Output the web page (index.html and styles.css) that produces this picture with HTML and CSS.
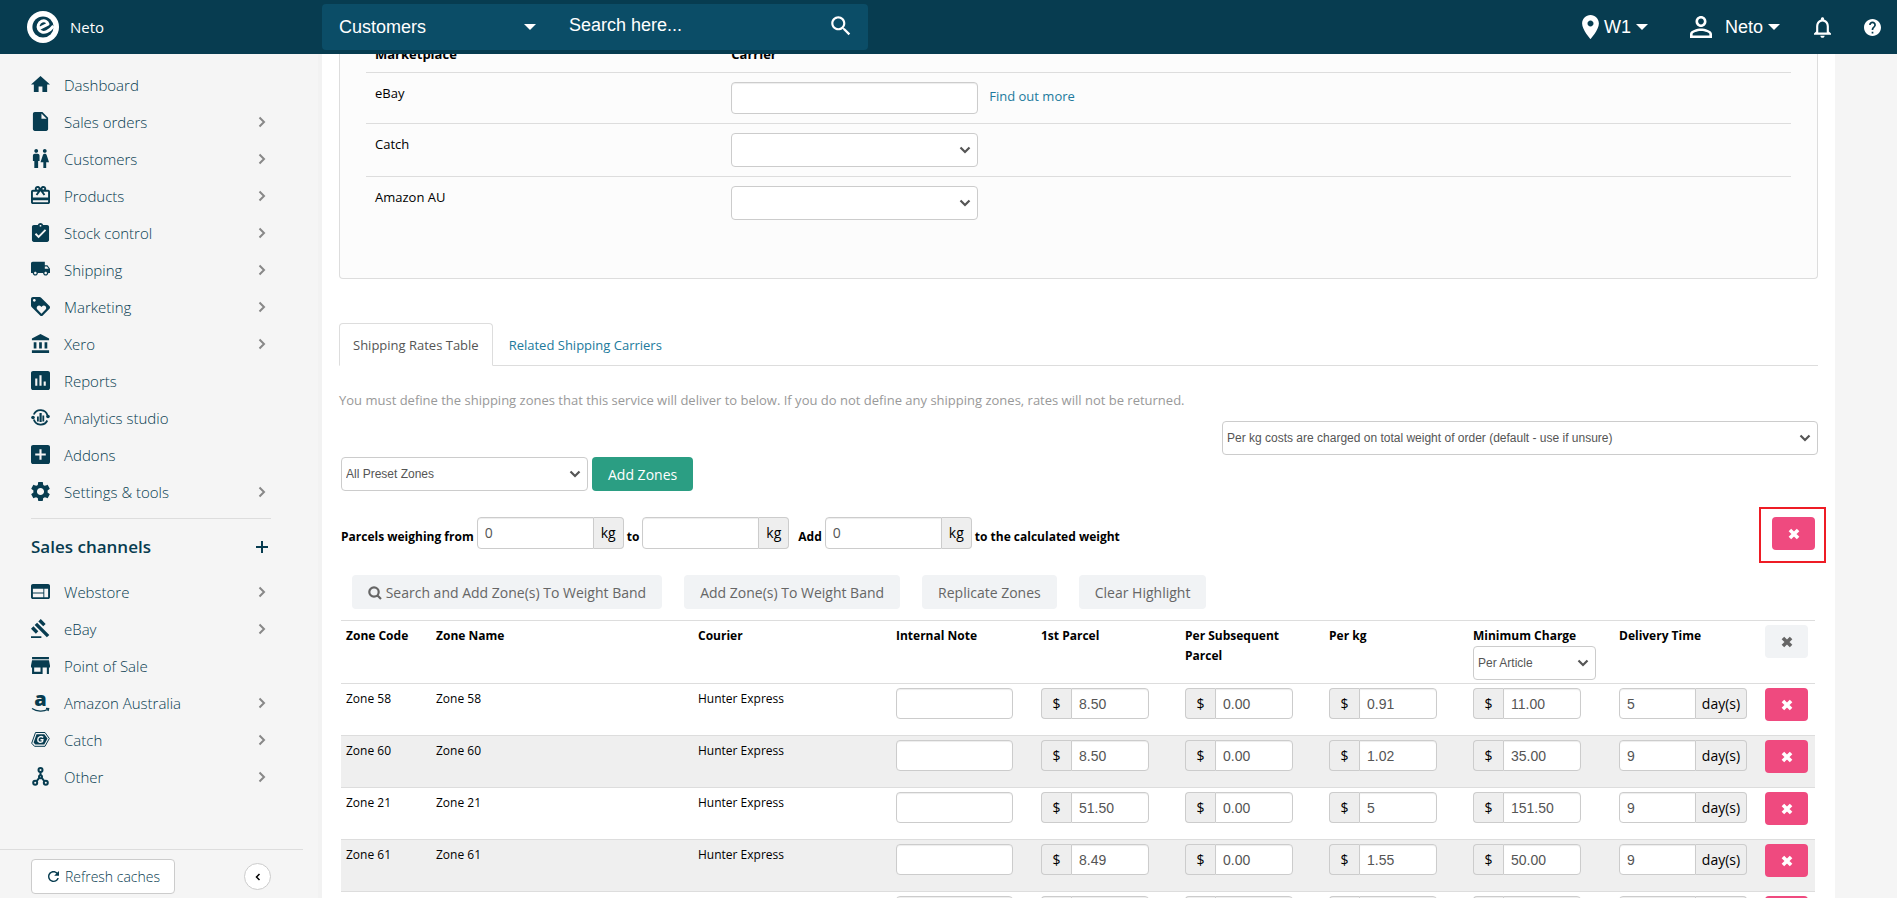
FILE: index.html
```html
<!DOCTYPE html>
<html lang="en">

<head>
    <meta charset="UTF-8">
    <meta name="viewport" content="width=device-width, initial-scale=1.0">
    <title>Neto</title>
    <link rel="stylesheet" href="styles.css">
</head>

<body>
    <!-- Shared icons -->
    <svg class="icon-defs" aria-hidden="true">
        <symbol id="icon-times" viewBox="0 0 12 12">
            <path d="M3.200 3.200l5.600 5.600M8.800 3.200l-5.600 5.600" fill="none" stroke="currentColor" stroke-width="3.600" stroke-linecap="square" />
        </symbol>
        <symbol id="icon-chevron" viewBox="0 0 8 12">
            <path d="M1.500 1.500L6 6l-4.500 4.500" fill="none" stroke="currentColor" stroke-width="2" />
        </symbol>
        <symbol id="icon-caret" viewBox="0 0 12 6">
            <path d="M0 0h12L6 6z" />
        </symbol>
    </svg>

    <!-- Top Bar -->
    <header class="topbar">
        <a class="brand" href="#">
            <svg class="brand-logo" viewBox="0 0 32 32" aria-hidden="true">
                <circle cx="16" cy="16" r="16" fill="#fff" />
                <circle cx="16" cy="16" r="10.600" fill="#073c50" />
                <path d="M11.500 17.800L21 13.200C20.300 10.600 17.600 9 14.900 10.200c-3.400 1.500-4.700 5.200-3.300 8 1.500 3 5 3.900 8.200 2.500 2.400-1 4.400-2.700 6.700-5.700" fill="none" stroke="#fff" stroke-width="3" stroke-linejoin="round" />
            </svg>
            <span>Neto</span>
        </a>
        <form class="search">
            <button type="button" class="search-type">Customers <svg class="caret"><use href="#icon-caret" /></svg></button>
            <input type="text" class="search-input" placeholder="Search here..." aria-label="Search">
            <button type="button" class="search-go" aria-label="Go">
                <svg viewBox="0 0 24 24"><path d="M15.500 14h-.79l-.28-.27C15.410 12.590 16 11.110 16 9.500 16 5.910 13.090 3 9.500 3S3 5.910 3 9.500 5.910 16 9.500 16c1.610 0 3.090-.59 4.230-1.570l.27.28v.79l5 4.990L20.490 19l-4.990-5zm-6 0C7.010 14 5 11.990 5 9.500S7.010 5 9.500 5 14 7.010 14 9.500 11.990 14 9.500 14z" /></svg>
            </button>
        </form>
        <nav class="top-actions">
            <button type="button" class="top-btn top-warehouse">
                <svg class="pin" viewBox="5 2 14 20"><path d="M12 2C8.130 2 5 5.130 5 9c0 5.250 7 13 7 13s7-7.750 7-13c0-3.870-3.130-7-7-7zm0 9.500c-1.380 0-2.500-1.120-2.500-2.500s1.120-2.500 2.500-2.500 2.500 1.120 2.500 2.500-1.120 2.500-2.500 2.500z" /></svg>
                W1 <svg class="caret"><use href="#icon-caret" /></svg>
            </button>
            <button type="button" class="top-btn top-user">
                <svg class="person" viewBox="4 4 16 16"><path d="M12 5.900c1.160 0 2.100.94 2.100 2.100s-.94 2.100-2.100 2.100S9.900 9.160 9.900 8s.94-2.100 2.100-2.100m0 9c2.970 0 6.100 1.460 6.100 2.100v1.100H5.900V17c0-.64 3.130-2.100 6.100-2.100M12 4C9.790 4 8 5.790 8 8s1.790 4 4 4 4-1.790 4-4-1.790-4-4-4zm0 9c-2.670 0-8 1.340-8 4v3h16v-3c0-2.660-5.330-4-8-4z" /></svg>
                Neto <svg class="caret"><use href="#icon-caret" /></svg>
            </button>
            <button type="button" class="top-btn" aria-label="Notifications">
                <svg class="bell" viewBox="4 2.500 16 19.500"><path d="M12 22c1.100 0 2-.9 2-2h-4c0 1.100.9 2 2 2zm6-6v-5c0-3.070-1.630-5.640-4.500-6.320V4c0-.83-.67-1.500-1.500-1.500s-1.500.67-1.500 1.500v.68C7.640 5.360 6 7.920 6 11v5l-2 2v1h16v-1l-2-2zm-2 1H8v-6c0-2.480 1.510-4.500 4-4.500s4 2.020 4 4.500v6z" /></svg>
            </button>
            <button type="button" class="top-btn top-help" aria-label="Help">
                <svg class="help" viewBox="2 2 20 20"><path d="M12 2C6.480 2 2 6.480 2 12s4.480 10 10 10 10-4.480 10-10S17.520 2 12 2zm1 17h-2v-2h2v2zm2.070-7.750l-.9.920C13.450 12.900 13 13.500 13 15h-2v-.5c0-1.100.45-2.100 1.170-2.830l1.240-1.260c.37-.36.59-.86.59-1.410 0-1.100-.9-2-2-2s-2 .9-2 2H8c0-2.210 1.790-4 4-4s4 1.790 4 4c0 .88-.36 1.680-.93 2.250z" /></svg>
            </button>
        </nav>
    </header>

    <div class="layout">
        <!-- Sidebar -->
        <aside class="sidebar">
            <nav class="menu">
                <a class="menu-item" href="#">
                    <svg viewBox="2 2 20 20"><path d="M10 20v-6h4v6h5v-8h3L12 3 2 12h3v8z" /></svg>
                    <span>Dashboard</span>
                </a>
                <a class="menu-item" href="#">
                    <svg viewBox="2 2 20 20"><path d="M6 2c-1.100 0-1.990.9-1.990 2L4 20c0 1.100.89 2 1.990 2H18c1.100 0 2-.9 2-2V8l-6-6H6zm7 7V3.500L18.500 9H13z" /></svg>
                    <span>Sales orders</span>
                    <svg class="chevron"><use href="#icon-chevron" /></svg>
                </a>
                <a class="menu-item" href="#">
                    <svg viewBox="2 2 20 20"><path d="M5.500 22v-7.500H4V9c0-1.100.9-2 2-2h3c1.100 0 2 .9 2 2v5.500H9.500V22h-4zM18 22v-6h3l-2.540-7.630C18.180 7.550 17.420 7 16.560 7h-.12c-.86 0-1.630.55-1.900 1.370L12 16h3v6h3zM7.500 6c1.110 0 2-.89 2-2s-.89-2-2-2-2 .89-2 2 .89 2 2 2zm9 0c1.110 0 2-.89 2-2s-.89-2-2-2-2 .89-2 2 .89 2 2 2z" /></svg>
                    <span>Customers</span>
                    <svg class="chevron"><use href="#icon-chevron" /></svg>
                </a>
                <a class="menu-item" href="#">
                    <svg viewBox="2 2 20 20"><path d="M20 6h-2.180c.11-.31.18-.65.18-1 0-1.660-1.340-3-3-3-1.050 0-1.960.54-2.500 1.350l-.5.67-.5-.68C10.960 2.540 10.050 2 9 2 7.340 2 6 3.340 6 5c0 .35.07.69.18 1H4c-1.110 0-1.990.89-1.990 2L2 19c0 1.110.89 2 2 2h16c1.110 0 2-.89 2-2V8c0-1.110-.89-2-2-2zm-5-2c.55 0 1 .45 1 1s-.45 1-1 1-1-.45-1-1 .45-1 1-1zM9 4c.55 0 1 .45 1 1s-.45 1-1 1-1-.45-1-1 .45-1 1-1zm11 15H4v-2h16v2zm0-5H4V8h5.080L7 10.830 8.620 12 11 8.760l1-1.360 1 1.360L15.380 12 17 10.830 14.920 8H20v6z" /></svg>
                    <span>Products</span>
                    <svg class="chevron"><use href="#icon-chevron" /></svg>
                </a>
                <a class="menu-item" href="#">
                    <svg viewBox="2 1 20 20"><path d="M19 3h-4.180C14.400 1.840 13.300 1 12 1c-1.300 0-2.400.84-2.820 2H5c-1.100 0-2 .9-2 2v14c0 1.100.9 2 2 2h14c1.100 0 2-.9 2-2V5c0-1.100-.9-2-2-2zm-7 0c.55 0 1 .45 1 1s-.45 1-1 1-1-.45-1-1 .45-1 1-1zm-2 14l-4-4 1.410-1.410L10 14.170l6.590-6.590L18 9l-8 8z" /></svg>
                    <span>Stock control</span>
                    <svg class="chevron"><use href="#icon-chevron" /></svg>
                </a>
                <a class="menu-item" href="#">
                    <svg viewBox="1 2 22 22"><path d="M20 8h-3V4H3c-1.100 0-2 .9-2 2v11h2c0 1.660 1.340 3 3 3s3-1.340 3-3h6c0 1.660 1.340 3 3 3s3-1.340 3-3h2v-5l-3-4zM6 18.500c-.83 0-1.500-.67-1.500-1.500s.67-1.500 1.500-1.500 1.500.67 1.500 1.500-.67 1.500-1.500 1.500zm13.500-9l1.960 2.500H17V9.500h2.500zm-1.500 9c-.83 0-1.500-.67-1.500-1.500s.67-1.500 1.500-1.500 1.500.67 1.500 1.500-.67 1.500-1.500 1.500z" /></svg>
                    <span>Shipping</span>
                    <svg class="chevron"><use href="#icon-chevron" /></svg>
                </a>
                <a class="menu-item" href="#">
                    <svg viewBox="2 2 20 20"><path d="M21.410 11.580l-9-9C12.050 2.220 11.550 2 11 2H4c-1.100 0-2 .9-2 2v7c0 .55.22 1.050.59 1.420l9 9c.36.36.86.58 1.410.58.55 0 1.050-.22 1.410-.59l7-7c.37-.36.59-.86.59-1.410 0-.55-.23-1.060-.59-1.420zM5.500 7C4.670 7 4 6.330 4 5.500S4.670 4 5.500 4 7 4.670 7 5.500 6.330 7 5.500 7zm11.770 8.270L13 19.540l-4.270-4.270C8.280 14.810 8 14.190 8 13.500c0-1.380 1.120-2.500 2.500-2.500.69 0 1.320.28 1.770.74l.73.72.73-.73c.45-.45 1.080-.73 1.770-.73 1.380 0 2.500 1.120 2.500 2.500 0 .69-.28 1.320-.73 1.770z" /></svg>
                    <span>Marketing</span>
                    <svg class="chevron"><use href="#icon-chevron" /></svg>
                </a>
                <a class="menu-item" href="#">
                    <svg viewBox="1 1 21 21"><path d="M4 10v7h3v-7H4zm6 0v7h3v-7h-3zM2 22h19v-3H2v3zm14-12v7h3v-7h-3zm-4.500-9L2 6v2h19V6l-9.500-5z" /></svg>
                    <span>Xero</span>
                    <svg class="chevron"><use href="#icon-chevron" /></svg>
                </a>
                <a class="menu-item" href="#">
                    <svg viewBox="3 3 18 18"><path d="M19 3H5c-1.100 0-2 .9-2 2v14c0 1.100.9 2 2 2h14c1.100 0 2-.9 2-2V5c0-1.100-.9-2-2-2zM9 17H7v-7h2v7zm4 0h-2V7h2v10zm4 0h-2v-4h2v4z" /></svg>
                    <span>Reports</span>
                </a>
                <a class="menu-item" href="#">
                    <svg viewBox="0 0 19 19">
                        <path d="M2.800 6.500a7.300 7.300 0 0 1 13.700 1M16.300 12.500a7.300 7.300 0 0 1-13.500-1" fill="none" stroke="currentColor" stroke-width="1.800" />
                        <circle cx="2" cy="9.500" r="1.800" />
                        <circle cx="17" cy="8.500" r="1.800" />
                        <path d="M6 8.500h1.800v5H6zM8.500 5h2.200v9H8.500zM11.400 7.500h1.800v6h-1.800z" />
                    </svg>
                    <span>Analytics studio</span>
                </a>
                <a class="menu-item" href="#">
                    <svg viewBox="3 3 18 18"><path d="M19 3H5c-1.110 0-2 .9-2 2v14c0 1.100.89 2 2 2h14c1.100 0 2-.9 2-2V5c0-1.100-.9-2-2-2zm-2 10h-4v4h-2v-4H7v-2h4V7h2v4h4v2z" /></svg>
                    <span>Addons</span>
                </a>
                <a class="menu-item" href="#">
                    <svg viewBox="2.400 2.400 19.200 19.200"><path d="M19.140 12.940c.04-.3.06-.61.06-.94 0-.32-.02-.64-.07-.94l2.030-1.580c.18-.14.23-.41.12-.61l-1.920-3.320c-.12-.22-.37-.29-.59-.22l-2.390.96c-.5-.38-1.030-.7-1.620-.94l-.36-2.540c-.04-.24-.24-.41-.48-.41h-3.840c-.24 0-.43.17-.47.41l-.36 2.540c-.59.24-1.130.57-1.620.94l-2.390-.96c-.22-.08-.47 0-.59.22L2.740 8.870c-.12.21-.08.47.12.61l2.030 1.580c-.05.3-.09.63-.09.94s.02.64.07.94l-2.030 1.580c-.18.14-.23.41-.12.61l1.920 3.320c.12.22.37.29.59.22l2.390-.96c.5.38 1.030.7 1.620.94l.36 2.540c.05.24.24.41.48.41h3.840c.24 0 .44-.17.47-.41l.36-2.540c.59-.24 1.130-.56 1.620-.94l2.390.96c.22.08.47 0 .59-.22l1.920-3.320c.12-.22.07-.47-.12-.61l-2.010-1.580zM12 15.600c-1.980 0-3.600-1.620-3.600-3.600s1.620-3.600 3.600-3.600 3.600 1.620 3.600 3.600-1.620 3.600-3.600 3.600z" /></svg>
                    <span>Settings &amp; tools</span>
                    <svg class="chevron"><use href="#icon-chevron" /></svg>
                </a>
            </nav>

            <div class="menu-heading">
                <h2>Sales channels</h2>
                <button type="button" aria-label="Add channel">
                    <svg viewBox="0 0 12 12"><path d="M6 0v12M0 6h12" stroke="currentColor" stroke-width="2" /></svg>
                </button>
            </div>

            <nav class="menu">
                <a class="menu-item" href="#">
                    <svg viewBox="2 2 20 20"><path d="M20 4H4c-1.100 0-1.990.9-1.990 2L2 18c0 1.100.9 2 2 2h16c1.100 0 2-.9 2-2V6c0-1.100-.9-2-2-2zm-5 14H4v-4h11v4zm0-5H4V9h11v4zm5 5h-4V9h4v9z" /></svg>
                    <span>Webstore</span>
                    <svg class="chevron"><use href="#icon-chevron" /></svg>
                </a>
                <a class="menu-item" href="#">
                    <svg viewBox="1 1 22 22"><path d="M1 21h12v2H1zM5.245 8.070l2.830-2.827 14.140 14.142-2.828 2.828zM12.317 1l5.657 5.656-2.830 2.830-5.654-5.660zM3.825 9.485l5.657 5.657-2.828 2.828-5.657-5.657z" /></svg>
                    <span>eBay</span>
                    <svg class="chevron"><use href="#icon-chevron" /></svg>
                </a>
                <a class="menu-item" href="#">
                    <svg viewBox="3 3 18 18"><path d="M20 4H4v2h16V4zm1 10v-2l-1-5H4l-1 5v2h1v6h10v-6h4v6h2v-6h1zm-9 4H6v-4h6v4z" /></svg>
                    <span>Point of Sale</span>
                </a>
                <a class="menu-item" href="#">
                    <svg class="amazon" viewBox="0 0 19 19">
                        <text class="amazon-a" x="9.500" y="13" text-anchor="middle">a</text>
                        <path d="M1 15.500c5 3.300 11.500 3.400 16 .8M15 15.400l2.700.2-.6 2.400" fill="none" stroke="currentColor" stroke-width="1.200" />
                    </svg>
                    <span>Amazon Australia</span>
                    <svg class="chevron"><use href="#icon-chevron" /></svg>
                </a>
                <a class="menu-item" href="#">
                    <svg viewBox="0 0 19 19">
                        <path d="M4.500 2.500h9.500l4.300 6-4.300 7.800H3.500L.7 13.200z" fill="none" stroke="currentColor" stroke-width="1" />
                        <path d="M5.500 4.200h7.800l3.200 4.400-3.200 6H4.300L2.600 12.500z" />
                        <path d="M12.200 7.300c-2.500-1.600-5.200-.3-5.400 2.400-.1 2.600 2.500 3.200 4.600 2l.4-2H9.500" fill="none" stroke="#f5f5f5" stroke-width="1.500" />
                    </svg>
                    <span>Catch</span>
                    <svg class="chevron"><use href="#icon-chevron" /></svg>
                </a>
                <a class="menu-item" href="#">
                    <svg viewBox="0 0 19 19">
                        <g fill="none" stroke="currentColor" stroke-width="2">
                            <circle cx="9.500" cy="3" r="2" />
                            <circle cx="9.500" cy="9.700" r="1.500" />
                            <circle cx="4.200" cy="15.800" r="2" />
                            <circle cx="14.800" cy="15.800" r="2" />
                            <path d="M9.500 5v3.500M8.300 10.900l-2.700 3.300M10.700 10.900l2.700 3.300" />
                        </g>
                    </svg>
                    <span>Other</span>
                    <svg class="chevron"><use href="#icon-chevron" /></svg>
                </a>
            </nav>

            <div class="sidebar-footer">
                <button type="button" class="refresh-btn">
                    <svg viewBox="4 4 16 16"><path d="M17.650 6.350C16.200 4.900 14.210 4 12 4c-4.420 0-7.990 3.580-7.990 8s3.570 8 7.990 8c3.730 0 6.840-2.550 7.730-6h-2.080c-.82 2.330-3.040 4-5.650 4-3.310 0-6-2.690-6-6s2.690-6 6-6c1.660 0 3.140.69 4.220 1.780L13 11h7V4l-2.350 2.350z" /></svg>
                    Refresh caches
                </button>
                <button type="button" class="collapse-btn" aria-label="Collapse menu">
                    <svg viewBox="0 0 6 8"><path d="M4.500 1L1.500 4l3 3" fill="none" stroke="currentColor" stroke-width="1.500" /></svg>
                </button>
            </div>
        </aside>

        <!-- Main Content -->
        <main class="content">
            <section class="card">
                <table class="market-table">
                    <thead>
                        <tr>
                            <th class="market-col">Marketplace</th>
                            <th>Carrier</th>
                        </tr>
                    </thead>
                    <tbody>
                        <tr>
                            <td><label for="carrier-ebay">eBay</label></td>
                            <td>
                                <div class="carrier">
                                    <input type="text" id="carrier-ebay" class="field field-md">
                                    <a class="more-link" href="#">Find out more</a>
                                </div>
                            </td>
                        </tr>
                        <tr>
                            <td><label for="carrier-catch">Catch</label></td>
                            <td><select id="carrier-catch" class="select field-md"><option></option></select></td>
                        </tr>
                        <tr>
                            <td><label for="carrier-amazon">Amazon AU</label></td>
                            <td><select id="carrier-amazon" class="select field-md"><option></option></select></td>
                        </tr>
                    </tbody>
                </table>
            </section>

            <div class="tabs">
                <a class="tab active" href="#">Shipping Rates Table</a>
                <a class="tab" href="#">Related Shipping Carriers</a>
            </div>

            <p class="help-text">You must define the shipping zones that this service will deliver to below. If you do not define any shipping zones, rates will not be returned.</p>

            <div class="charge-row">
                <select class="select charge-select" aria-label="Charge basis">
                    <option>Per kg costs are charged on total weight of order (default - use if unsure)</option>
                </select>
            </div>

            <div class="rates">
                <div class="zone-row">
                    <select class="select field-md" aria-label="Preset zones">
                        <option>All Preset Zones</option>
                    </select>
                    <button type="button" class="btn btn-green">Add Zones</button>
                </div>

                <div class="band-row">
                    <label for="weight-from">Parcels weighing from</label>
                    <div class="group group-kg"><input type="text" id="weight-from" class="field" value="0"><span class="addon">kg</span></div>
                    <label for="weight-to">to</label>
                    <div class="group group-kg"><input type="text" id="weight-to" class="field"><span class="addon">kg</span></div>
                    <label for="weight-add" class="label-add">Add</label>
                    <div class="group group-kg"><input type="text" id="weight-add" class="field" value="0"><span class="addon">kg</span></div>
                    <span class="band-note">to the calculated weight</span>
                    <div class="highlight">
                        <button type="button" class="btn btn-x btn-pink" aria-label="Remove weight band"><svg><use href="#icon-times" /></svg></button>
                    </div>
                </div>

                <div class="band-actions">
                    <button type="button" class="btn btn-grey">
                        <svg class="btn-search" viewBox="0 0 14 14"><path d="M13 13L9.500 9.500M10.700 6a4.700 4.700 0 1 1-9.400 0 4.700 4.700 0 0 1 9.400 0z" fill="none" stroke="currentColor" stroke-width="2.200" /></svg>
                        Search and Add Zone(s) To Weight Band
                    </button>
                    <button type="button" class="btn btn-grey">Add Zone(s) To Weight Band</button>
                    <button type="button" class="btn btn-grey">Replicate Zones</button>
                    <button type="button" class="btn btn-grey">Clear Highlight</button>
                </div>

                <table class="zones">
                    <colgroup>
                        <col class="col-code">
                        <col>
                        <col class="col-courier">
                        <col class="col-note">
                        <col class="col-rate">
                        <col class="col-rate">
                        <col class="col-rate">
                        <col class="col-wide">
                        <col class="col-wide">
                        <col class="col-remove">
                    </colgroup>
                    <thead>
                        <tr>
                            <th>Zone Code</th>
                            <th>Zone Name</th>
                            <th>Courier</th>
                            <th>Internal Note</th>
                            <th>1st Parcel</th>
                            <th>Per Subsequent<br>Parcel</th>
                            <th>Per kg</th>
                            <th><label for="min-charge">Minimum Charge</label><select id="min-charge" class="select min-select"><option>Per Article</option></select></th>
                            <th>Delivery Time</th>
                            <th class="remove"><button type="button" class="btn btn-x btn-grey" aria-label="Remove all"><svg><use href="#icon-times" /></svg></button></th>
                        </tr>
                    </thead>
                    <tbody>
                        <tr>
                            <td>Zone 58</td>
                            <td>Zone 58</td>
                            <td>Hunter Express</td>
                            <td><input type="text" class="field note" aria-label="Internal note"></td>
                            <td><div class="group"><span class="addon">$</span><input type="text" class="field" aria-label="1st parcel" value="8.50"></div></td>
                            <td><div class="group"><span class="addon">$</span><input type="text" class="field" aria-label="Subsequent parcel" value="0.00"></div></td>
                            <td><div class="group"><span class="addon">$</span><input type="text" class="field" aria-label="Per kg" value="0.91"></div></td>
                            <td><div class="group"><span class="addon">$</span><input type="text" class="field" aria-label="Minimum charge" value="11.00"></div></td>
                            <td><div class="group group-days"><input type="text" class="field" aria-label="Delivery time" value="5"><span class="addon">day(s)</span></div></td>
                            <td class="remove"><button type="button" class="btn btn-x btn-pink" aria-label="Remove"><svg><use href="#icon-times" /></svg></button></td>
                        </tr>
                        <tr>
                            <td>Zone 60</td>
                            <td>Zone 60</td>
                            <td>Hunter Express</td>
                            <td><input type="text" class="field note" aria-label="Internal note"></td>
                            <td><div class="group"><span class="addon">$</span><input type="text" class="field" aria-label="1st parcel" value="8.50"></div></td>
                            <td><div class="group"><span class="addon">$</span><input type="text" class="field" aria-label="Subsequent parcel" value="0.00"></div></td>
                            <td><div class="group"><span class="addon">$</span><input type="text" class="field" aria-label="Per kg" value="1.02"></div></td>
                            <td><div class="group"><span class="addon">$</span><input type="text" class="field" aria-label="Minimum charge" value="35.00"></div></td>
                            <td><div class="group group-days"><input type="text" class="field" aria-label="Delivery time" value="9"><span class="addon">day(s)</span></div></td>
                            <td class="remove"><button type="button" class="btn btn-x btn-pink" aria-label="Remove"><svg><use href="#icon-times" /></svg></button></td>
                        </tr>
                        <tr>
                            <td>Zone 21</td>
                            <td>Zone 21</td>
                            <td>Hunter Express</td>
                            <td><input type="text" class="field note" aria-label="Internal note"></td>
                            <td><div class="group"><span class="addon">$</span><input type="text" class="field" aria-label="1st parcel" value="51.50"></div></td>
                            <td><div class="group"><span class="addon">$</span><input type="text" class="field" aria-label="Subsequent parcel" value="0.00"></div></td>
                            <td><div class="group"><span class="addon">$</span><input type="text" class="field" aria-label="Per kg" value="5"></div></td>
                            <td><div class="group"><span class="addon">$</span><input type="text" class="field" aria-label="Minimum charge" value="151.50"></div></td>
                            <td><div class="group group-days"><input type="text" class="field" aria-label="Delivery time" value="9"><span class="addon">day(s)</span></div></td>
                            <td class="remove"><button type="button" class="btn btn-x btn-pink" aria-label="Remove"><svg><use href="#icon-times" /></svg></button></td>
                        </tr>
                        <tr>
                            <td>Zone 61</td>
                            <td>Zone 61</td>
                            <td>Hunter Express</td>
                            <td><input type="text" class="field note" aria-label="Internal note"></td>
                            <td><div class="group"><span class="addon">$</span><input type="text" class="field" aria-label="1st parcel" value="8.49"></div></td>
                            <td><div class="group"><span class="addon">$</span><input type="text" class="field" aria-label="Subsequent parcel" value="0.00"></div></td>
                            <td><div class="group"><span class="addon">$</span><input type="text" class="field" aria-label="Per kg" value="1.55"></div></td>
                            <td><div class="group"><span class="addon">$</span><input type="text" class="field" aria-label="Minimum charge" value="50.00"></div></td>
                            <td><div class="group group-days"><input type="text" class="field" aria-label="Delivery time" value="9"><span class="addon">day(s)</span></div></td>
                            <td class="remove"><button type="button" class="btn btn-x btn-pink" aria-label="Remove"><svg><use href="#icon-times" /></svg></button></td>
                        </tr>
                        <tr>
                            <td></td>
                            <td></td>
                            <td></td>
                            <td><input type="text" class="field note" aria-label="Internal note"></td>
                            <td><div class="group"><span class="addon"></span><input type="text" class="field" aria-label="1st parcel"></div></td>
                            <td><div class="group"><span class="addon"></span><input type="text" class="field" aria-label="Subsequent parcel"></div></td>
                            <td><div class="group"><span class="addon"></span><input type="text" class="field" aria-label="Per kg"></div></td>
                            <td><div class="group"><span class="addon"></span><input type="text" class="field" aria-label="Minimum charge"></div></td>
                            <td><div class="group group-days"><input type="text" class="field" aria-label="Delivery time"><span class="addon"></span></div></td>
                            <td class="remove"><button type="button" class="btn btn-x btn-pink" aria-label="Remove"></button></td>
                        </tr>
                    </tbody>
                </table>
            </div>
        </main>
    </div>
</body>

</html>
```
FILE: styles.css
```css
:root {
    --color-navy: #073c50;
    --color-navy-light: #0b4d67;
    --color-link: #217a9c;
    --color-green: #2b9e83;
    --color-pink: #ef4a7f;
    --color-border: #ccc;
    --color-line: #ddd;
    --font-ui: "Segoe UI", "Open Sans", "Noto Sans", sans-serif;
    --font-control: Arial, "Liberation Sans", sans-serif;
}

* {
    margin: 0;
    padding: 0;
    box-sizing: border-box;
}

body {
    height: 100vh;
    overflow: hidden;
    background-color: #f5f5f5;
    font-family: var(--font-ui);
    font-size: 13px;
    line-height: 20px;
    color: #000;
}

a {
    color: var(--color-link);
    text-decoration: none;
}

button {
    border: none;
    background: none;
    cursor: pointer;
    font-family: var(--font-ui);
}

svg {
    fill: currentColor;
    flex: none;
}

.icon-defs {
    position: absolute;
    width: 0;
    height: 0;
}

.caret {
    width: 12px;
    height: 6px;
}

/* Top Bar */
.topbar {
    position: fixed;
    top: 0;
    left: 0;
    right: 0;
    z-index: 10;
    height: 54px;
    display: flex;
    align-items: center;
    background-color: var(--color-navy);
    color: #fff;
}

.brand {
    width: 322px;
    padding-left: 27px;
    display: flex;
    align-items: center;
    gap: 11px;
    color: #fff;
    font-size: 15px;
}

.brand-logo {
    width: 32px;
    height: 32px;
}

.search {
    width: 546px;
    height: 46px;
    display: flex;
    align-items: center;
    background-color: var(--color-navy-light);
    border-radius: 4px;
}

.search-type {
    width: 230px;
    padding: 0 16px 0 17px;
    display: flex;
    align-items: center;
    justify-content: space-between;
    color: #fff;
    font-family: var(--font-control);
    font-size: 18px;
}

.search-input {
    flex: 1;
    min-width: 0;
    padding: 0 0 4px 17px;
    border: none;
    outline: none;
    background: none;
    color: #fff;
    font-family: var(--font-control);
    font-size: 18px;
}

.search-input::placeholder {
    color: #fff;
}

.search-go {
    padding: 0 14px 2px;
    color: #fff;
}

.search-go svg {
    display: block;
    width: 26px;
    height: 26px;
}

.top-actions {
    margin-left: auto;
    padding-right: 16px;
    display: flex;
    align-items: center;
}

.top-btn {
    display: flex;
    align-items: center;
    gap: 5px;
    color: #fff;
    font-family: var(--font-control);
    font-size: 18px;
}

.top-user {
    margin: 0 34px 0 42px;
}

.top-help {
    margin-left: 33px;
}

.pin {
    width: 17px;
    height: 24px;
}

.person {
    width: 22px;
    height: 22px;
    margin-right: 8px;
}

.bell {
    width: 17px;
    height: 21px;
}

.help {
    width: 17px;
    height: 17px;
}

/* Sidebar */
.layout {
    display: flex;
    height: 100vh;
}

.sidebar {
    width: 322px;
    flex: none;
    padding-top: 66px;
    display: flex;
    flex-direction: column;
    border-right: 4px solid #f2f2f2;
    color: var(--color-navy);
}

.menu {
    padding: 0 50px 0 31px;
}

.menu-item {
    height: 37px;
    display: flex;
    align-items: center;
    gap: 14px;
    color: var(--color-navy);
    font-size: 15px;
    font-weight: 300;
}

.menu-item svg {
    width: 19px;
    height: 19px;
}

.menu-item .chevron {
    width: 8px;
    height: 12px;
    margin: 0 2px 0 auto;
    color: #888;
}

.menu-item .amazon {
    overflow: visible;
}

.amazon-a {
    font-family: var(--font-ui);
    font-size: 20px;
    font-weight: 800;
}

.menu-heading {
    margin: 8px 47px 0 31px;
    padding: 18px 3px 16px 0;
    display: flex;
    align-items: center;
    justify-content: space-between;
    border-top: 1px solid var(--color-line);
}

.menu-heading h2 {
    font-size: 17px;
    font-weight: 600;
}

.menu-heading button {
    color: var(--color-navy);
}

.menu-heading svg {
    display: block;
    width: 12px;
    height: 12px;
}

.sidebar-footer {
    margin: auto 15px 0 0;
    padding: 9px 32px 4px 31px;
    display: flex;
    align-items: center;
    justify-content: space-between;
    border-top: 1px solid var(--color-line);
}

.refresh-btn {
    height: 35px;
    padding: 0 14px 0 16px;
    display: flex;
    align-items: center;
    gap: 6px;
    border: 1px solid var(--color-border);
    border-radius: 4px;
    background-color: #fff;
    color: var(--color-navy);
    font-size: 14px;
    font-weight: 300;
}

.refresh-btn svg {
    width: 11px;
    height: 11px;
}

.collapse-btn {
    width: 27px;
    height: 27px;
    display: flex;
    align-items: center;
    justify-content: center;
    border: 1px solid var(--color-border);
    border-radius: 50%;
    background-color: #fff;
}

.collapse-btn svg {
    width: 6px;
    height: 8px;
}

/* Main Content */
.content {
    flex: 1;
    min-width: 0;
    margin-right: 62px;
    padding: 0 17px;
    overflow-y: auto;
    scrollbar-width: none;
    background-color: #fff;
}

.card {
    padding: 36px 26px 49px;
    border: 1px solid var(--color-line);
    border-top: none;
    border-radius: 0 0 4px 4px;
    background-color: #fcfcfc;
}

table {
    width: 100%;
    border-collapse: collapse;
}

th,
td {
    text-align: left;
    vertical-align: top;
}

.market-table th {
    padding: 8px 9px;
}

.market-table td {
    padding: 9px;
    border-top: 1px solid var(--color-line);
}

.market-table td:first-child {
    padding-top: 10px;
}

.market-col {
    width: 25%;
}

.carrier {
    display: flex;
}

.more-link {
    padding: 4px 0 0 11px;
}

label {
    display: inline-block;
}

.field,
.select {
    border: 1px solid var(--color-border);
    border-radius: 4px;
    background-color: #fff;
    color: #555;
    font-family: var(--font-control);
}

.field {
    height: 32px;
    padding: 0 7px;
    font-size: 14px;
    box-shadow: inset 0 1px 1px rgba(0, 0, 0, 0.075);
}

.select {
    height: 34px;
    padding: 0 24px 0 4px;
    display: block;
    appearance: none;
    background-image: url("data:image/svg+xml,%3Csvg xmlns='http://www.w3.org/2000/svg' viewBox='0 0 12 8'%3E%3Cpath d='M1.500 1.500L6 6l4.500-4.500' fill='none' stroke='%23555' stroke-width='2.200'/%3E%3C/svg%3E");
    background-repeat: no-repeat;
    background-position: right 6px center;
    background-size: 12px 8px;
    font-size: 12px;
}

.field-md {
    width: 247px;
}

.tabs {
    margin-top: 44px;
    display: flex;
    align-items: flex-end;
    border-bottom: 1px solid var(--color-line);
}

.tab {
    margin: 0 2px -1px 0;
    padding: 11px 13px 10px;
    border: 1px solid transparent;
    border-radius: 4px 4px 0 0;
}

.tab.active {
    border-color: var(--color-line);
    border-bottom-color: #fff;
    background-color: #fff;
    color: #555;
}

.help-text {
    margin-top: 24px;
    color: #999;
}

.charge-row {
    margin-top: 11px;
    display: flex;
    justify-content: flex-end;
}

.charge-select {
    width: 596px;
}

.rates {
    padding: 2px 3px 0 2px;
}

.zone-row {
    display: flex;
    gap: 4px;
}

.btn {
    height: 34px;
    padding: 0 16px;
    border-radius: 4px;
    font-size: 14px;
}

.btn-green {
    background-color: var(--color-green);
    color: #fff;
}

.btn-grey {
    background-color: #f1f3f5;
    color: #666;
}

.btn-pink {
    background-color: var(--color-pink);
    color: #fff;
}

.btn-x {
    width: 43px;
    height: 33px;
    padding: 0;
    display: flex;
    align-items: center;
    justify-content: center;
}

.btn-x svg {
    width: 12px;
    height: 12px;
}

.btn-search {
    width: 14px;
    height: 14px;
    vertical-align: -2px;
}

.band-row {
    margin-top: 16px;
    display: flex;
    align-items: flex-start;
    gap: 3px;
    font-size: 12px;
    font-weight: 700;
}

.band-row label,
.band-note {
    padding-top: 20px;
}

.band-row .label-add {
    margin-left: 6px;
}

/* The outline sits wider than the table on the right */
.highlight {
    width: 67px;
    height: 56px;
    margin: 0 -11px 0 auto;
    padding: 8px 9px 0 0;
    display: flex;
    justify-content: flex-end;
    border: 2px solid #ee1c25;
}

.group {
    width: 108px;
    display: flex;
}

.group .field {
    flex: 1;
    min-width: 0;
    border-radius: 0 4px 4px 0;
}

.addon {
    width: 30px;
    display: flex;
    align-items: center;
    justify-content: center;
    border: 1px solid var(--color-border);
    border-right: none;
    border-radius: 4px 0 0 4px;
    background-color: #eee;
    font-size: 14px;
    font-weight: 400;
}

.group-kg {
    width: 147px;
    margin-top: 10px;
}

.group-kg .field {
    padding-bottom: 2px;
    font-family: var(--font-ui);
}

.group-days {
    width: 128px;
}

.group-kg .field,
.group-days .field {
    border-radius: 4px 0 0 4px;
}

.group-kg .addon,
.group-days .addon {
    border: 1px solid var(--color-border);
    border-left: none;
    border-radius: 0 4px 4px 0;
}

.group-days .addon {
    width: 51px;
}

.band-actions {
    margin: 12px 0 11px 11px;
    display: flex;
    gap: 22px;
}

/* Zones Table */
.zones {
    table-layout: fixed;
    font-size: 12px;
}

.col-code {
    width: 90px;
}

.col-courier {
    width: 198px;
}

.col-note {
    width: 145px;
}

.col-rate {
    width: 144px;
}

.col-wide {
    width: 146px;
}

.col-remove {
    width: 55px;
}

.zones th,
.zones td {
    padding: 5px;
    border-top: 1px solid var(--color-line);
}

.zones th {
    height: 63px;
    font-weight: 700;
}

.zones td {
    height: 52px;
    padding-top: 4px;
}

.zones td:nth-child(-n+3) {
    padding-top: 5px;
}

.zones tbody tr:nth-child(even) {
    background-color: #efefef;
}

.zones .field {
    height: 31px;
}

.note {
    width: 117px;
}

.min-select {
    width: 123px;
}

.zones th:not(.remove) {
    padding-bottom: 3px;
}

.zones .remove {
    padding-top: 4px;
}
```
